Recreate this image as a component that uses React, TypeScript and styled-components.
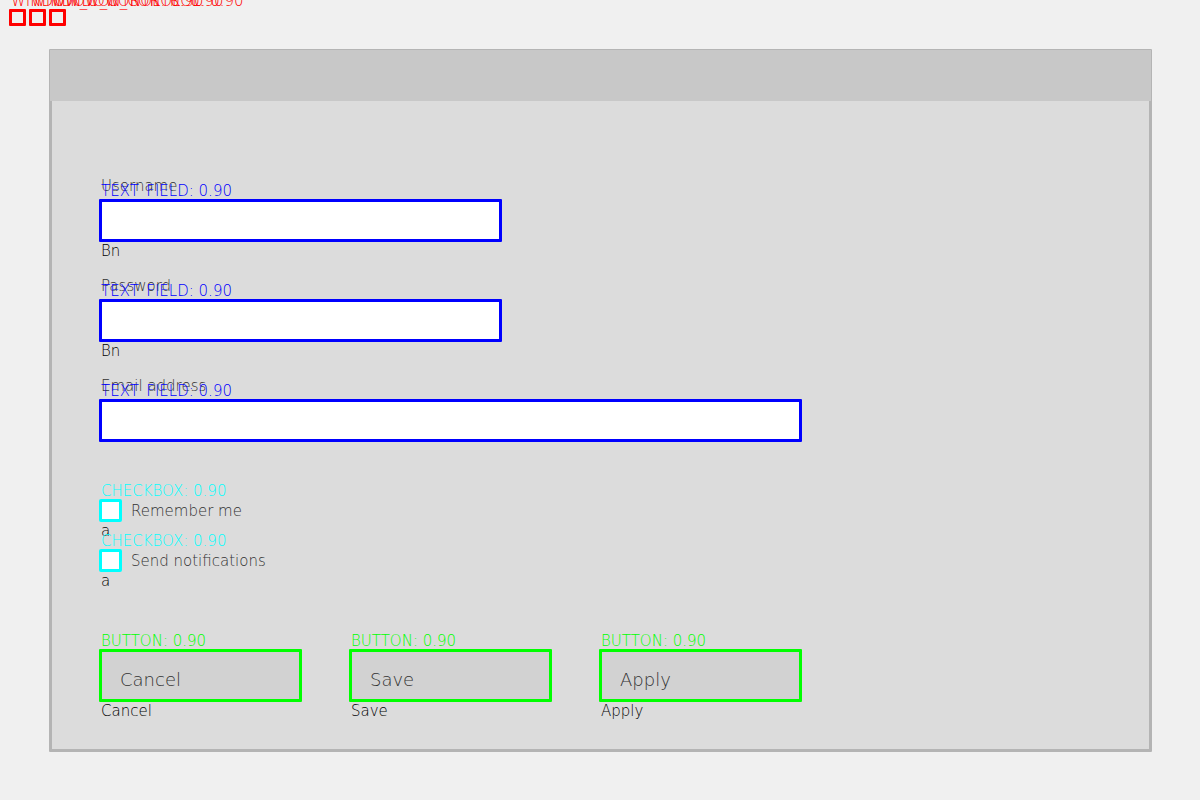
import React from "react";
import styled, { createGlobalStyle } from "styled-components";

const GlobalStyle = createGlobalStyle`
  *, *::before, *::after { box-sizing: border-box; }
  body {
    margin: 0;
    background: #f0f0f0;
    color: #323232;
    font-family: "DejaVu Sans", "DejaVu Sans Light", sans-serif;
    font-weight: 200;
    font-size: 15px;
    line-height: 18px;
  }
`;

const colors = {
  window: "#ff0000",
  field: "#0000ff",
  checkbox: "#00ffff",
  button: "#00ff00",
};

const Page = styled.div`
  padding: 9px 48px 48px 9px;
`;

const WindowControls = styled.div`
  display: flex;
  gap: 3px;
  margin-bottom: 23px;
`;

const Target = styled.div`
  position: relative;
  display: flex;
`;

const Tag = styled.span<{ $color: string }>`
  position: absolute;
  left: 2px;
  bottom: calc(100% - 1px);
  color: ${(p) => p.$color};
  white-space: nowrap;
  pointer-events: none;
`;

const WindowControl = styled.button`
  width: 17px;
  height: 17px;
  padding: 0;
  border: 3px solid ${colors.window};
  border-radius: 1px;
  background: transparent;
`;

const Window = styled.main`
  margin-left: 40px;
  border: 3px solid #b4b4b4;
  border-radius: 1px;
  background: #dcdcdc;
`;

const TitleBar = styled.header`
  height: 51px;
  margin: -2px -2px 0;
  background: #c8c8c8;
`;

const Form = styled.form`
  display: flex;
  flex-direction: column;
  padding: 76px 47px 29px;
`;

const Fields = styled.div`
  display: flex;
  flex-direction: column;
  gap: 17px;
`;

const Field = styled.div<{ $width: number }>`
  width: 100%;
  max-width: ${(p) => p.$width}px;
`;

const FieldLabel = styled.label`
  display: block;
  margin-bottom: 4px;
  padding-left: 2px;
`;

const TextInput = styled.input`
  width: 100%;
  height: 43px;
  padding: 0 8px;
  border: 3px solid ${colors.field};
  border-radius: 1px;
  background: #ffffff;
  font: inherit;
  outline: none;
`;

const Caption = styled.div`
  min-height: 18px;
  padding-left: 2px;
  color: #000000;
`;

const Options = styled.div`
  display: flex;
  flex-direction: column;
  gap: 9px;
  margin-top: 39px;
`;

const OptionRow = styled.div`
  display: flex;
  align-items: flex-end;
  gap: 9px;
`;

const OptionLabel = styled.label`
  padding-bottom: 2px;
`;

const Checkbox = styled.input`
  appearance: none;
  width: 23px;
  height: 23px;
  margin: 0;
  border: 3px solid ${colors.checkbox};
  border-radius: 2px;
  background: #ffffff;
`;

const Actions = styled.div`
  display: flex;
  flex-wrap: wrap;
  gap: 47px;
  margin-top: 59px;
`;

const Action = styled.div`
  width: 203px;
`;

const ActionButton = styled.button`
  width: 100%;
  height: 53px;
  padding: 8px 18px 0;
  border: 3px solid ${colors.button};
  border-radius: 1px;
  background: #d2d2d2;
  color: #323232;
  font: inherit;
  font-size: 18px;
  text-align: left;
`;

const controls = ["Minimize", "Maximize", "Close"];

const fields = [
  { id: "username", label: "Username", type: "text", width: 403, caption: "Bn" },
  { id: "password", label: "Password", type: "password", width: 403, caption: "Bn" },
  { id: "email", label: "Email address", type: "email", width: 703, caption: "" },
];

const options = [
  { id: "remember", label: "Remember me", caption: "a" },
  { id: "notifications", label: "Send notifications", caption: "a" },
];

const actions = ["Cancel", "Save", "Apply"];

export default function App() {
  return (
    <>
      <GlobalStyle />
      <Page>
        <WindowControls>
          {controls.map((name) => (
            <Target key={name}>
              <WindowControl type="button" aria-label={name} />
              <Tag $color={colors.window}>WINDOW_CONTROL: 0.90</Tag>
            </Target>
          ))}
        </WindowControls>
        <Window>
          <TitleBar />
          <Form onSubmit={(e) => e.preventDefault()}>
            <Fields>
              {fields.map((f) => (
                <Field key={f.id} $width={f.width}>
                  <FieldLabel htmlFor={f.id}>{f.label}</FieldLabel>
                  <Target>
                    <TextInput id={f.id} type={f.type} autoComplete="off" />
                    <Tag $color={colors.field}>TEXT_FIELD: 0.90</Tag>
                  </Target>
                  <Caption>{f.caption}</Caption>
                </Field>
              ))}
            </Fields>
            <Options>
              {options.map((o) => (
                <div key={o.id}>
                  <OptionRow>
                    <Target>
                      <Checkbox id={o.id} type="checkbox" />
                      <Tag $color={colors.checkbox}>CHECKBOX: 0.90</Tag>
                    </Target>
                    <OptionLabel htmlFor={o.id}>{o.label}</OptionLabel>
                  </OptionRow>
                  <Caption>{o.caption}</Caption>
                </div>
              ))}
            </Options>
            <Actions>
              {actions.map((name) => (
                <Action key={name}>
                  <Target>
                    <ActionButton type="button">{name}</ActionButton>
                    <Tag $color={colors.button}>BUTTON: 0.90</Tag>
                  </Target>
                  <Caption>{name}</Caption>
                </Action>
              ))}
            </Actions>
          </Form>
        </Window>
      </Page>
    </>
  );
}
